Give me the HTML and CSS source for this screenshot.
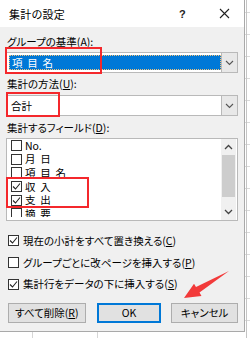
FILE: index.html
```html
<!DOCTYPE html>
<html lang="ja">
<head>
<meta charset="utf-8">
<title>集計の設定</title>
<link rel="stylesheet" href="styles.css">
</head>
<body>
<div class="page">
  <div class="dialog">
    <div class="titlebar">
      <span class="title">集計の設定</span>
      <span class="help">?</span>
      <svg class="close" width="11" height="11" viewBox="0 0 11 11"><path d="M1 1 L10 10 M10 1 L1 10" stroke="#222" stroke-width="1.1" fill="none"/></svg>
    </div>
    <div class="content">
      <div class="label">グループの基準(<u>A</u>):</div>
      <div class="combo">
        <div class="value selected"><span class="spaced">項 目 名</span></div>
        <div class="drop"><svg width="9" height="6" viewBox="0 0 9 6"><path d="M1 1 L4.5 4.5 L8 1" stroke="#555" stroke-width="1.1" fill="none"/></svg></div>
      </div>
      <div class="label l2">集計の方法(<u>U</u>):</div>
      <div class="combo c2">
        <div class="value"><span>合計</span></div>
        <div class="drop"><svg width="9" height="6" viewBox="0 0 9 6"><path d="M1 1 L4.5 4.5 L8 1" stroke="#555" stroke-width="1.1" fill="none"/></svg></div>
      </div>
      <div class="label l3">集計するフィールド(<u>D</u>):</div>
      <div class="list">
        <div class="items">
          <div class="item"><span class="box"></span><span>No.</span></div>
          <div class="item"><span class="box"></span><span class="spaced">月 日</span></div>
          <div class="item"><span class="box"></span><span class="spaced">項 目 名</span></div>
          <div class="item"><span class="box"><svg width="9" height="9" viewBox="0 0 9 9"><path d="M1 4.5 L3.5 7 L8 1.5" stroke="#222" stroke-width="1.1" fill="none"/></svg></span><span class="spaced">収 入</span></div>
          <div class="item"><span class="box"><svg width="9" height="9" viewBox="0 0 9 9"><path d="M1 4.5 L3.5 7 L8 1.5" stroke="#222" stroke-width="1.1" fill="none"/></svg></span><span class="spaced">支 出</span></div>
          <div class="item"><span class="box"></span><span class="spaced">摘 要</span></div>
        </div>
        <div class="scroll">
          <div class="sbtn"><svg width="9" height="6" viewBox="0 0 9 6"><path d="M1 5 L4.5 1.5 L8 5" stroke="#444" stroke-width="1.3" fill="none"/></svg></div>
          <div class="thumb"></div>
          <div class="track"></div>
          <div class="sbtn"><svg width="9" height="6" viewBox="0 0 9 6"><path d="M1 1 L4.5 4.5 L8 1" stroke="#444" stroke-width="1.3" fill="none"/></svg></div>
        </div>
      </div>
      <div class="opts">
        <div class="opt"><span class="box"><svg width="9" height="9" viewBox="0 0 9 9"><path d="M1 4.5 L3.5 7 L8 1.5" stroke="#222" stroke-width="1.1" fill="none"/></svg></span><span>現在の小計をすべて置き換える(<u>C</u>)</span></div>
        <div class="opt"><span class="box"></span><span>グループごとに改ページを挿入する(<u>P</u>)</span></div>
        <div class="opt"><span class="box"><svg width="9" height="9" viewBox="0 0 9 9"><path d="M1 4.5 L3.5 7 L8 1.5" stroke="#222" stroke-width="1.1" fill="none"/></svg></span><span>集計行をデータの下に挿入する(<u>S</u>)</span></div>
      </div>
      <div class="buttons">
        <button class="btn b-del">すべて削除(<u>R</u>)</button>
        <button class="btn b-ok">OK</button>
        <button class="btn b-cancel">キャンセル</button>
      </div>
    </div>
  </div>
  <div class="mark m1"></div>
  <div class="mark m2"></div>
  <div class="mark m3"></div>
  <svg class="arrow" width="250" height="338" viewBox="0 0 250 338">
    <polygon points="229,271 199.5,292.6 201.5,296 184,298 194,283.8 196,287 " fill="#f23a3a"/>
  </svg>
</div>
</body>
</html>
```

FILE: styles.css
```css
* { box-sizing: border-box; }
html, body { margin: 0; padding: 0; }
body {
  width: 250px;
  height: 338px;
  overflow: hidden;
  background-color: #fff;
  background-image:
    linear-gradient(to right, transparent 32px, #d6d6d6 32px, #d6d6d6 33px, transparent 33px, transparent 97px, #d6d6d6 97px, #d6d6d6 98px, transparent 98px, transparent 246px, #c4c4c4 246px, #c4c4c4 247px, transparent 247px),
    linear-gradient(to bottom, transparent 21px, #dadada 21px);
  background-size: 250px 338px, 250px 22px;
  background-position: 0 0, 0 -9px;
  font-family: "Noto Sans CJK JP", "Noto Sans", sans-serif;
  font-feature-settings: "palt";
  color: #000;
}
.page { position: relative; width: 250px; height: 338px; }
.dialog {
  width: 245px;
  height: 332px;
  background: #f0f0f0;
  border-right: 1px solid #a9a9a9;
  border-bottom: 1px solid #a9a9a9;
  display: flex;
  flex-direction: column;
}
.titlebar {
  height: 27px;
  background: #fff;
  display: flex;
  align-items: center;
  padding-left: 9px;
  font-size: 11px;
}
.title { flex: 1; letter-spacing: 0.3px; }
.help { font-size: 11px; font-weight: bold; color: #222; width: 10px; margin-right: 30px; font-family: "Liberation Sans", sans-serif; }
.close { margin-right: 14px; }
.content {
  padding: 8px 6px 0 6px;
  display: flex;
  flex-direction: column;
  font-size: 10.5px;
}
.label { height: 14px; line-height: 14px; padding-left: 1px; }
.l2 { margin-top: 4px; }
.l3 { margin-top: 5px; }
.spaced { letter-spacing: 1.2px; }
.combo {
  margin-top: 3px;
  height: 21px;
  width: 232px;
  background: #fff;
  border: 1px solid #b9b9b9;
  display: flex;
}
.c2 { margin-top: 4px; }
.value {
  flex: 1;
  display: flex;
  align-items: center;
  padding-left: 4px;
  line-height: 14px;
}
.value.selected {
  margin: 2px 0 2px 2px;
  padding-left: 3px;
  background: #0078d7;
  color: #fff;
  outline: 1px dotted #f3c27a;
  outline-offset: -1px;
}
.drop {
  width: 16px;
  border-left: 1px solid #b9b9b9;
  background: #e8e8e8;
  display: flex;
  align-items: center;
  justify-content: center;
}
.list {
  margin-top: 3px;
  width: 232px;
  height: 83px;
  background: #fff;
  border: 1px solid #b9b9b9;
  display: flex;
}
.items {
  flex: 1;
  height: 78px;
  overflow: hidden;
  padding-left: 4px;
}
.item {
  height: 13.6px;
  line-height: 12px;
  display: flex;
  align-items: center;
  gap: 3px;
  font-size: 10.5px;
}
.box {
  width: 11px;
  height: 11px;
  border: 1px solid #333;
  background: #fff;
  display: inline-flex;
  align-items: center;
  justify-content: center;
  flex: none;
}
.scroll {
  width: 15px;
  background: #f0f0f0;
  display: flex;
  flex-direction: column;
  margin-right: 1px;
}
.sbtn {
  height: 16px;
  display: flex;
  align-items: center;
  justify-content: center;
}
.thumb { height: 42px; background: #cdcdcd; margin: 0 1px; }
.track { flex: 1; }
.opts { margin-top: 9px; display: flex; flex-direction: column; }
.opt {
  height: 21.7px;
  line-height: 14px;
  display: flex;
  align-items: center;
  gap: 4px;
  padding-left: 2px;
}
.buttons {
  margin-top: 8px;
  padding-left: 2px;
  display: flex;
}
.btn {
  height: 20px;
  font: inherit;
  font-size: 10.5px;
  line-height: 14px;
  background: #e1e1e1;
  border: 1px solid #adadad;
  color: #000;
  padding: 0;
  display: flex;
  align-items: center;
  justify-content: center;
}
.b-del { width: 78px; }
.b-ok { width: 65px; margin-left: 11px; border-color: #0078d7; box-shadow: inset 0 0 0 1px #0078d7; }
.b-cancel { width: 67px; margin-left: 10px; }
.mark {
  position: absolute;
  border: 2px solid #f4282c;
}
.m1 { left: 5px; top: 47px; width: 97px; height: 27px; }
.m2 { left: 6px; top: 92px; width: 54px; height: 25px; }
.m3 { left: 6px; top: 177px; width: 83px; height: 31px; }
.arrow { position: absolute; left: 0; top: 0; pointer-events: none; }
```
